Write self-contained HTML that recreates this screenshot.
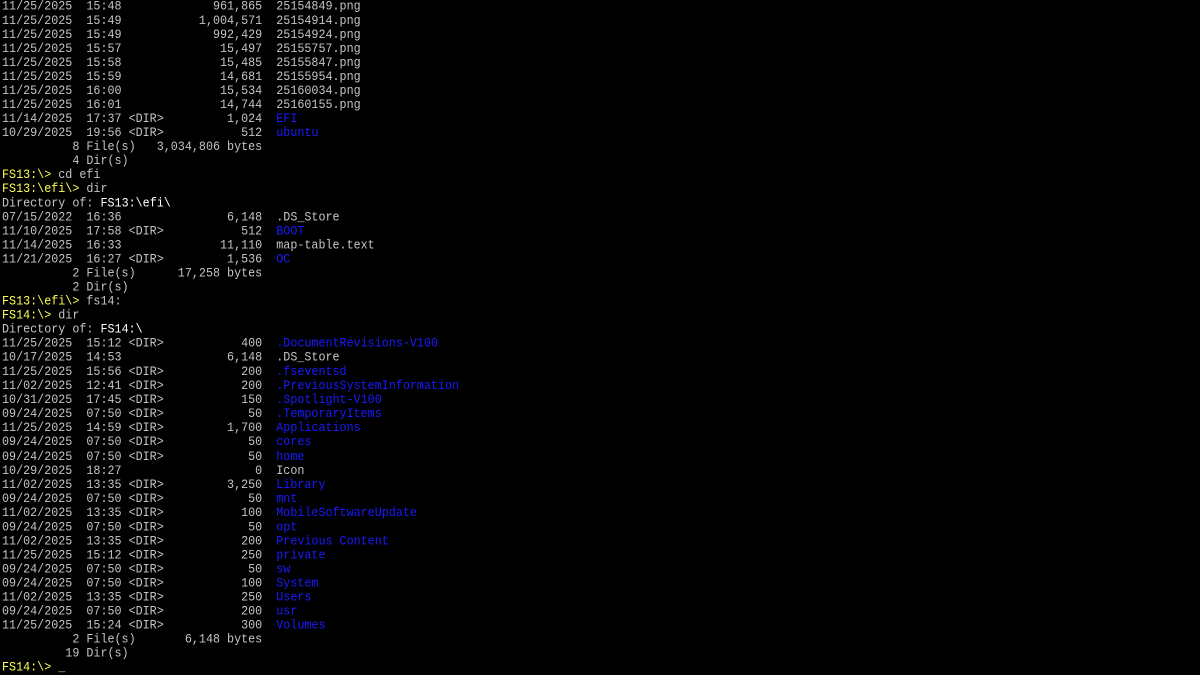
<!DOCTYPE html>
<html><head><meta charset="utf-8"><style>
html,body{margin:0;padding:0;background:#000;width:1200px;height:675px;overflow:hidden}
pre{margin:0;position:absolute;left:2px;top:0px;font-family:"Liberation Mono","DejaVu Sans Mono",monospace;font-size:11.72px;line-height:13.02px;color:#c4c4c4;letter-spacing:0;transform:scaleY(1.08);transform-origin:0 0}
.y{color:#ffff55}.b{color:#1a1aff}.w{color:#fff}
</style></head><body><pre>11/25/2025  15:48             961,865  25154849.png
11/25/2025  15:49           1,004,571  25154914.png
11/25/2025  15:49             992,429  25154924.png
11/25/2025  15:57              15,497  25155757.png
11/25/2025  15:58              15,485  25155847.png
11/25/2025  15:59              14,681  25155954.png
11/25/2025  16:00              15,534  25160034.png
11/25/2025  16:01              14,744  25160155.png
11/14/2025  17:37 &lt;DIR&gt;         1,024  <span class="b">EFI</span>
10/29/2025  19:56 &lt;DIR&gt;           512  <span class="b">ubuntu</span>
          8 File(s)   3,034,806 bytes
          4 Dir(s)
<span class="y">FS13:\&gt;</span> cd efi
<span class="y">FS13:\efi\&gt;</span> dir
Directory of: <span class="w">FS13:\efi\</span>
07/15/2022  16:36               6,148  .DS_Store
11/10/2025  17:58 &lt;DIR&gt;           512  <span class="b">BOOT</span>
11/14/2025  16:33              11,110  map-table.text
11/21/2025  16:27 &lt;DIR&gt;         1,536  <span class="b">OC</span>
          2 File(s)      17,258 bytes
          2 Dir(s)
<span class="y">FS13:\efi\&gt;</span> fs14:
<span class="y">FS14:\&gt;</span> dir
Directory of: <span class="w">FS14:\</span>
11/25/2025  15:12 &lt;DIR&gt;           400  <span class="b">.DocumentRevisions-V100</span>
10/17/2025  14:53               6,148  .DS_Store
11/25/2025  15:56 &lt;DIR&gt;           200  <span class="b">.fseventsd</span>
11/02/2025  12:41 &lt;DIR&gt;           200  <span class="b">.PreviousSystemInformation</span>
10/31/2025  17:45 &lt;DIR&gt;           150  <span class="b">.Spotlight-V100</span>
09/24/2025  07:50 &lt;DIR&gt;            50  <span class="b">.TemporaryItems</span>
11/25/2025  14:59 &lt;DIR&gt;         1,700  <span class="b">Applications</span>
09/24/2025  07:50 &lt;DIR&gt;            50  <span class="b">cores</span>
09/24/2025  07:50 &lt;DIR&gt;            50  <span class="b">home</span>
10/29/2025  18:27                   0  Icon
11/02/2025  13:35 &lt;DIR&gt;         3,250  <span class="b">Library</span>
09/24/2025  07:50 &lt;DIR&gt;            50  <span class="b">mnt</span>
11/02/2025  13:35 &lt;DIR&gt;           100  <span class="b">MobileSoftwareUpdate</span>
09/24/2025  07:50 &lt;DIR&gt;            50  <span class="b">opt</span>
11/02/2025  13:35 &lt;DIR&gt;           200  <span class="b">Previous Content</span>
11/25/2025  15:12 &lt;DIR&gt;           250  <span class="b">private</span>
09/24/2025  07:50 &lt;DIR&gt;            50  <span class="b">sw</span>
09/24/2025  07:50 &lt;DIR&gt;           100  <span class="b">System</span>
11/02/2025  13:35 &lt;DIR&gt;           250  <span class="b">Users</span>
09/24/2025  07:50 &lt;DIR&gt;           200  <span class="b">usr</span>
11/25/2025  15:24 &lt;DIR&gt;           300  <span class="b">Volumes</span>
          2 File(s)       6,148 bytes
         19 Dir(s)
<span class="y">FS14:\&gt;</span> _</pre></body></html>
